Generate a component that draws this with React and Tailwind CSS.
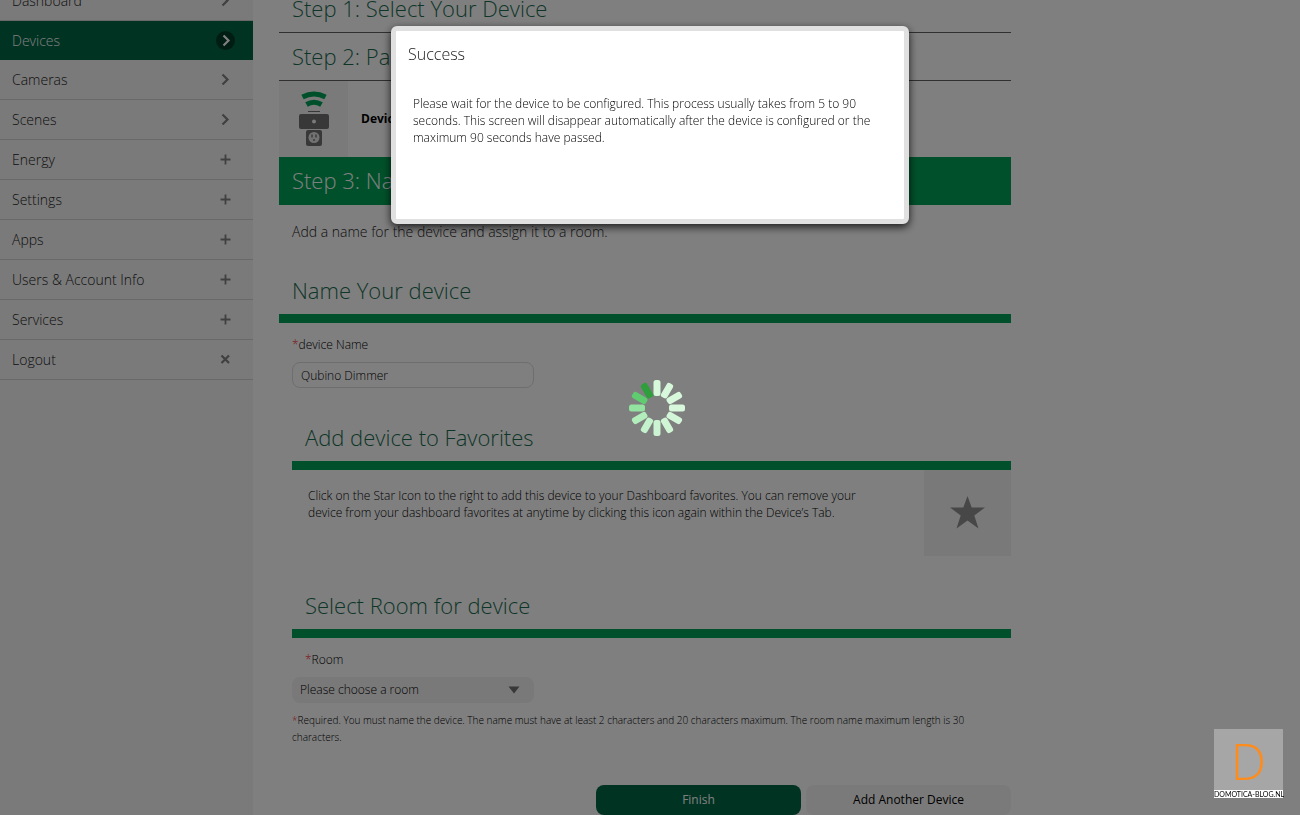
import { useState } from "react";

const menu = [
  { label: "Dashboard", icon: "arrow" },
  { label: "Devices", icon: "arrow", active: true },
  { label: "Cameras", icon: "arrow" },
  { label: "Scenes", icon: "arrow" },
  { label: "Energy", icon: "plus" },
  { label: "Settings", icon: "plus" },
  { label: "Apps", icon: "plus" },
  { label: "Users & Account Info", icon: "plus" },
  { label: "Services", icon: "plus" },
  { label: "Logout", icon: "close" },
];

const spokes = [
  "#d8f8dc", "#d8f8dc", "#d8f8dc", "#d8f8dc", "#d4f6d8", "#d0f5d4",
  "#ccf4d2", "#c4f2cc", "#b2edbc", "#92e3a0", "#5fcc70", "#2f9e3c",
];

const iconPaths = {
  arrow: "M6.5 4.5 11.5 9.5 6.5 14.5",
  plus: "M9.5 4.5V14.5M4.5 9.5H14.5",
  close: "M5.5 5.5 13 13M13 5.5 5.5 13",
};

function MenuIcon({ name, active }) {
  return (
    <svg viewBox="0 0 19 19" className="w-[19px] h-[19px]" fill="none" aria-hidden="true">
      {active && <circle cx="9.5" cy="9.5" r="9.5" fill="#003a26" />}
      <path
        d={iconPaths[name]}
        transform={active ? "translate(1 0)" : undefined}
        stroke={active ? "#ffffff" : "#808080"}
        strokeWidth={name === "plus" ? 1.8 : 2.2}
      />
    </svg>
  );
}

function Sidebar() {
  return (
    <nav className="w-[253px] shrink-0 bg-[#f4f4f4]">
      <ul className="-mt-[19px]">
        {menu.map((item) => (
          <li key={item.label}>
            <a
              href="#"
              className={
                item.active
                  ? "flex items-center justify-between h-[39px] pl-3 pr-[18px] bg-[#006644] text-white"
                  : "flex items-center justify-between h-10 pl-3 pr-[18px] border-b border-[#d2d2d2] text-[#222222]"
              }>
              <span>{item.label}</span>
              <MenuIcon name={item.icon} active={item.active} />
            </a>
          </li>
        ))}
      </ul>
    </nav>
  );
}

function DeviceIcon() {
  return (
    <svg viewBox="0 0 32 56" className="w-8 h-14" aria-hidden="true">
      <path d="M4.5 6Q16 0 27.5 6" fill="none" stroke="#00a356" strokeWidth="5" />
      <path d="M8.5 13.5Q16 9 23.5 13.5" fill="none" stroke="#00a356" strokeWidth="5" />
      <path d="M10 20.5H22" stroke="#707070" strokeWidth="1" />
      <rect x="1" y="23" width="30" height="15" rx="2" fill="#707070" />
      <circle cx="16" cy="30.5" r="2" fill="#f4f4f4" />
      <rect x="8" y="39" width="16" height="16" rx="2" fill="#707070" />
      <circle cx="16" cy="46.5" r="5.5" fill="#e4e4e4" />
      <path d="M14 43.5V46.5M18 43.5V46.5M16 48V50" stroke="#707070" strokeWidth="1.4" />
    </svg>
  );
}

function SectionTitle({ children }) {
  return (
    <h2 className="h-[47px] pl-[13px] border-b-[9px] border-[#00a356] box-content text-[22px] leading-[46px] text-[#1c6c50]">
      {children}
    </h2>
  );
}

function Wizard() {
  const [name, setName] = useState("Qubino Dimmer");

  return (
    <main className="flex-1 max-w-[732px] ml-[26px] mr-4">
      <h2 className="-mt-4 h-[49px] pl-[13px] border-b border-[#606060] text-[22px] leading-[48px] text-[#1c6c50]">
        Step 1: Select Your Device
      </h2>
      <h2 className="h-12 pl-[13px] border-b border-[#606060] text-[22px] leading-[47px] text-[#1c6c50]">
        Step 2: Pair Your Device
      </h2>
      <div className="flex items-center h-[76px]">
        <div className="flex items-center justify-center w-[69px] h-full bg-[#f4f4f4]">
          <DeviceIcon />
        </div>
        <p className="pl-[13px] text-[12px] font-bold text-black">Device Paired</p>
      </div>
      <h2 className="h-12 pl-[13px] bg-[#00a356] text-[22px] leading-[47px] text-white">
        Step 3: Name Your Device
      </h2>
      <p className="pt-[17px] pl-[13px] leading-5 text-[#222222]">
        Add a name for the device and assign it to a room.
      </p>

      <form onSubmit={(e) => e.preventDefault()}>
        <div className="pt-[25px]">
          <SectionTitle>Name Your device</SectionTitle>
        </div>
        <div className="pl-[13px] pt-3">
          <label htmlFor="device-name" className="block text-[12px] leading-5 text-black">
            <span className="text-red-500">*</span>device Name
          </label>
          <input
            id="device-name"
            type="text"
            value={name}
            onChange={(e) => setName(e.target.value)}
            className="block mt-[7px] w-[242px] h-[26px] px-2 rounded-lg border border-[#dcdcdc] bg-white text-[12px] text-black"
          />

          <div className="pt-[26px]">
            <SectionTitle>Add device to Favorites</SectionTitle>
          </div>
          <div className="flex justify-between">
            <p className="max-w-[592px] pt-[17px] px-4 text-[12px] leading-[17px] text-black">
              Click on the Star Icon to the right to add this device to your Dashboard favorites. You can remove your
              device from your dashboard favorites at anytime by clicking this icon again within the Device’s Tab.
            </p>
            <button
              type="button"
              aria-label="Add to favorites"
              className="flex items-center justify-center w-[87px] h-[86px] shrink-0 bg-[#f2f2f2]">
              <svg viewBox="0 0 36 34" className="w-9 h-[34px]" aria-hidden="true">
                <path d="M17.5 0 21.7 11.5H35L24.3 19.5 28.5 32.5 17.5 24.5 6.5 32.5 10.7 19.5 0 11.5H13.3Z" fill="#8f8f8f" />
              </svg>
            </button>
          </div>

          <div className="pt-[26px]">
            <SectionTitle>Select Room for device</SectionTitle>
          </div>
          <label htmlFor="room" className="block pt-3 pl-[13px] text-[12px] leading-5 text-black">
            <span className="text-red-500">*</span>Room
          </label>
          <div className="relative mt-[7px] w-[242px]">
            <select
              id="room"
              className="block w-full h-[26px] px-2 rounded-lg appearance-none bg-[#f2f2f2] text-[12px] text-black">
              <option>Please choose a room</option>
            </select>
            <svg viewBox="0 0 12 8" className="absolute right-[14px] top-[9px] w-3 h-2 pointer-events-none" aria-hidden="true">
              <path d="M0.5 0.5H11.5L6 7.5Z" fill="#707070" />
            </svg>
          </div>
          <p className="pt-[9px] text-[10px] leading-[17px] text-black">
            <span className="text-red-500">*</span>Required. You must name the device. The name must have at least 2
            characters and 20 characters maximum. The room name maximum length is 30 characters.
          </p>
        </div>
        <div className="flex justify-end gap-[5px] pt-[39px]">
          <button type="submit" className="w-[205px] h-[30px] rounded-lg bg-[#006644] text-[12px] font-normal text-white">
            Finish
          </button>
          <button type="button" className="w-[205px] h-[30px] rounded-lg bg-[#f4f4f4] text-[12px] font-normal text-black">
            Add Another Device
          </button>
        </div>
      </form>
    </main>
  );
}

function Spinner() {
  return (
    <svg viewBox="-28 -28 56 56" className="absolute left-1/2 top-1/2 -ml-[21px] -mt-7 w-14 h-14" role="status">
      {spokes.map((color, i) => (
        <rect key={i} x="-3.5" y="-28" width="7" height="16" rx="2.5" fill={color} transform={`rotate(${i * 30})`} />
      ))}
    </svg>
  );
}

function App() {
  return (
    <div className={'relative h-screen overflow-hidden bg-white font-["Open_Sans",sans-serif] font-light text-[14px]'}>
      <div className="flex min-h-full">
        <Sidebar />
        <Wizard />
      </div>

      {/* modal layer */}
      <div className="fixed inset-0 bg-black/50">
        <Spinner />
        <div
          role="dialog"
          aria-labelledby="dialog-title"
          className="mx-auto mt-[26px] w-[518px] h-[198px] border-[5px] border-[#e0e0e0] rounded-md bg-white shadow-[0_3px_9px_rgba(0,0,0,0.8)] relative">
          <h1 id="dialog-title" className="pt-3 pl-3 text-[16px] leading-[22px] text-[#222222]">Success</h1>
          <p className="pt-[30px] pl-[17px] pr-6 text-[12px] leading-[17px] text-black">
            Please wait for the device to be configured. This process usually takes from 5 to 90 seconds. This screen
            will disappear automatically after the device is configured or the maximum 90 seconds have passed.
          </p>
        </div>
      </div>

      <div className="fixed right-[17px] bottom-[17px] w-[69px] bg-[#a6a6a6] text-center">
        <div className="h-[61px] text-[50px] leading-[64px] text-[#ff8c1a]">D</div>
        <div className="h-2 bg-white font-['Lato',sans-serif] text-[7px] leading-2 font-normal text-black whitespace-nowrap">DOMOTICA-BLOG.NL</div>
      </div>
    </div>
  );
}

export default App;
